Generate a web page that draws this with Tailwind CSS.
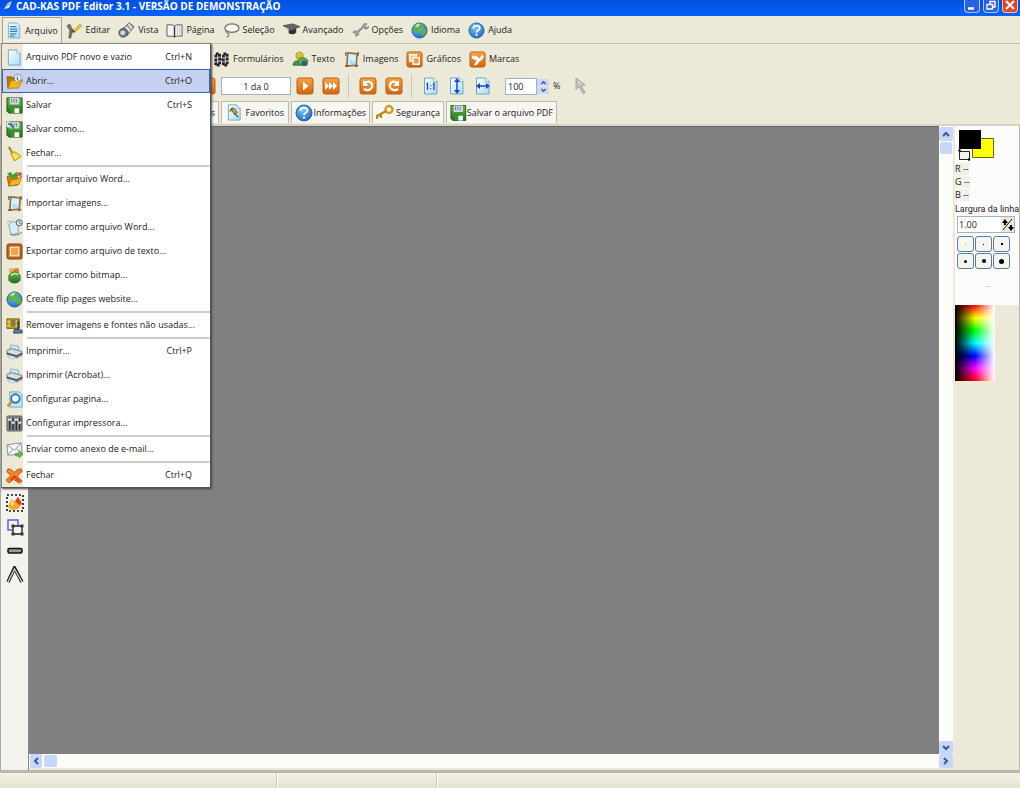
<!DOCTYPE html>
<html lang="pt-BR">
<head>
    <meta charset="UTF-8">
    <meta name="viewport" content="width=device-width, initial-scale=1.0">
    <title>CAD-KAS PDF Editor 3.1</title>
    <script src="https://cdn.jsdelivr.net/npm/@tailwindcss/browser@4"></script>
</head>
<body class="h-screen flex flex-col overflow-hidden bg-[#ece9d8] font-['Open_Sans',sans-serif] text-[9px] leading-3 text-[#222] relative">

    <!-- Icons -->
    <svg class="absolute size-0">
        <defs>
            <linearGradient id="gOrange" x1="0" y1="0" x2="0" y2="1"><stop offset="0" stop-color="#f6a544"/><stop offset="1" stop-color="#d2640c"/></linearGradient>
            <linearGradient id="gPage" x1="0" y1="0" x2="1" y2="1"><stop offset="0" stop-color="#fff"/><stop offset="1" stop-color="#a5dcf5"/></linearGradient>
            <radialGradient id="gBlue" cx=".4" cy=".3" r=".8"><stop offset="0" stop-color="#7cc8f8"/><stop offset="1" stop-color="#1462b8"/></radialGradient>
            <linearGradient id="gGreen" x1="0" y1="0" x2="0" y2="1"><stop offset="0" stop-color="#6cc04a"/><stop offset="1" stop-color="#1e6e1c"/></linearGradient>
        </defs>
        <symbol id="page" viewBox="0 0 18 18"><path d="M2.500 1h9l3.500 3.500V17H2.500z" fill="url(#gPage)" stroke="#6aa7cf"/><path d="M11.500 1v3.500H15" fill="#fff" stroke="#6aa7cf" stroke-width=".7"/></symbol>
        <symbol id="doc" viewBox="0 0 18 18"><path d="M2.500 1h9l3 3v13h-12z" fill="url(#gPage)" stroke="#7ab0c8"/><path d="M4 5h7M4 7.500h8M4 10h8M4 12.500h7M4 15h5" stroke="#2b86bb" stroke-width="1.300"/></symbol>
        <symbol id="tools" viewBox="0 0 18 18"><path d="M1 4l3-2 2 4 1 3-2 8H3l1-8z" fill="#777" stroke="#444" stroke-width=".6"/><path d="M7 10l8-8 2 2-8 7z" fill="#e8c832" stroke="#a88a10" stroke-width=".6"/><path d="M6 8l3 3" stroke="#5b4a10" stroke-width="2"/></symbol>
        <symbol id="spyglass" viewBox="0 0 18 18"><path d="M4 8l8-7 5 4-8 10z" fill="#a9a9a9" stroke="#555"/><path d="M8 5l5 5M11 2l4 5" stroke="#eee" stroke-width="1.500"/><circle cx="5.500" cy="11.500" r="4.500" fill="#74808c" stroke="#444"/><circle cx="5" cy="11.500" r="2.500" fill="#c9dcec"/></symbol>
        <symbol id="book" viewBox="0 0 18 18"><path d="M1 3h6l2 1.500L11 3h6v12h-6l-2 1-2-1H1z" fill="#f6f6f6" stroke="#555"/><path d="M9 4.500V16" stroke="#333" stroke-width="1.500"/><path d="M12 4v10M14.500 4v10" stroke="#aaa" stroke-width=".8"/></symbol>
        <symbol id="lasso" viewBox="0 0 18 18"><ellipse cx="9.500" cy="6.500" rx="7.500" ry="4.500" fill="#f7f6f0" stroke="#777" stroke-width="1.400"/><path d="M3 9c-1 3 4 2 3 5 0 1-1 2-2 2" fill="none" stroke="#777" stroke-width="1.200"/></symbol>
        <symbol id="cap" viewBox="0 0 18 18"><path d="M0 4l10-2 8 3-9 3z" fill="#666" stroke="#333" stroke-width=".7"/><path d="M6 7.500V12c3 2 6 1 8-1V6.500l-5 2z" fill="#333"/><path d="M3 5l2 3" stroke="#999"/></symbol>
        <symbol id="wrench" viewBox="0 0 18 18"><path d="M1 11c1-2 3-2 4-1l6-5c0-3 3-4 5-3l-2 2 1 2 3-1c-1 3-4 3-6 1l-5 5c1 3-2 5-4 3l2-2z" fill="#a5a5a5" stroke="#777" stroke-width=".8"/></symbol>
        <symbol id="globe" viewBox="0 0 18 18"><circle cx="9" cy="9" r="8" fill="url(#gBlue)" stroke="#28618f"/><path d="M3 5c3-4 8-4 10-2l-1 4-3 1-1 3-3-1-3-1zM11 9l5-2c1 4-1 7-4 8l-2-3z" fill="#5db23c"/><path d="M4 4c2-2 4-2.500 6-2L7 6z" fill="#e8f6e0" opacity=".7"/></symbol>
        <symbol id="help" viewBox="0 0 18 18"><circle cx="9" cy="9" r="8" fill="url(#gBlue)" stroke="#2c6294"/><path d="M5.500 7c0-4.500 7-4 7-.5 0 2.500-3.500 2-3.500 4.500" fill="none" stroke="#fff" stroke-width="1.900"/><circle cx="9" cy="13.600" r="1.200" fill="#fff"/></symbol>
        <symbol id="openfolder" viewBox="0 0 18 18"><path d="M1 4h5l1 1h5v10L2 16z" fill="#b97408" stroke="#7a4c05" stroke-width=".7"/><rect x="9" y="2" width="7" height="9" rx="1" fill="#e4eef2" stroke="#7e8f9a" stroke-width=".8"/><path d="M12 4v3l2 1" stroke="#446" fill="none"/><path d="M2 16L5 8h5l2 2 6-3-5 9z" fill="#f5b428" stroke="#a96c08" stroke-width=".7"/></symbol>
        <symbol id="disk" viewBox="0 0 18 18"><path d="M1 1h16v16H3l-2-2z" fill="url(#gGreen)" stroke="#1c5420"/><path d="M4 1h10v7H4z" fill="#cfd9e4"/><path d="M6 2v4M8.500 2v4M11 2v4" stroke="#6f7d93"/><path d="M5 11h9v6H5z" fill="#3b8e34"/><path d="M9 12h5v5H9z" fill="#fff"/></symbol>
        <symbol id="diskas" viewBox="0 0 18 18"><use href="#disk"/><path d="M0 0h4l2 3-2 5-4-2z" fill="#d7eef1" stroke="#4c8990" stroke-width=".7"/><path d="M2 3c3 0 5 1 6 5" stroke="#155c2b" stroke-width="1.500" fill="none"/></symbol>
        <symbol id="broom" viewBox="0 0 18 18"><path d="M3 2l4 7" stroke="#b2893a" stroke-width="2.400"/><path d="M5 9l4-2 7 5-7 5z" fill="#f2da2c" stroke="#9c860e" stroke-width=".8"/><path d="M8 10l2 4M10 9l3 4" stroke="#fff8a0"/></symbol>
        <symbol id="importword" viewBox="0 0 18 18"><path d="M1 6l5-2 2 2h4v9l-9 1z" fill="#c68412" stroke="#805206" stroke-width=".7"/><path d="M1 3l4-2 2 3 4-3 3 4-7 3z" fill="#4a9a3c"/><path d="M12 1l5 1-2 4z" fill="#dc3c28"/><path d="M3 16l3-7h5l6-4-3 9z" fill="#f8b22a" stroke="#a96808" stroke-width=".7"/></symbol>
        <symbol id="frame" viewBox="0 0 18 18"><path d="M5 2l10 1-1 12-10 1z" fill="#d5f0fa" stroke="#957347" stroke-width="1.800"/><path d="M3 1v4M16 1v4M2 16h4M13 17l3-2" stroke="#5f5138" stroke-width="1.300"/><path d="M6 13l3-4 4 5z" fill="#a9dcf0"/></symbol>
        <symbol id="scroll" viewBox="0 0 18 18"><path d="M2 3h9l2 3v9l-8 2-1-7z" fill="#d5eef7" stroke="#88a6b4"/><path d="M1 3c2-2 4 0 3 3" fill="#fff" stroke="#88a6b4"/><circle cx="14" cy="4" r="3.300" fill="#dbe4e8" stroke="#555"/><path d="M14 2v2l2 1M5 16c4 2 8 1 12-2" stroke="#4b7080" fill="none"/></symbol>
        <symbol id="stamp" viewBox="0 0 18 18"><rect x="1" y="1" width="16" height="16" rx="2" fill="#b4641c" stroke="#7e4512"/><rect x="4.500" y="4.500" width="9" height="9" fill="#f4a24c" stroke="#fbe1b4" stroke-width="1.500"/></symbol>
        <symbol id="bitmap" viewBox="0 0 18 18"><circle cx="6" cy="4" r="3" fill="#e9b25c"/><circle cx="11" cy="4" r="3" fill="#d08436"/><path d="M3 9c3-5 9-5 12 0v5c-3 4-9 4-12 0z" fill="url(#gGreen)" stroke="#2c6a22" stroke-width=".8"/><path d="M5 9c2-2 5-3 8-1" stroke="#c6eca8" fill="none" stroke-width="1.500"/></symbol>
        <symbol id="clamp" viewBox="0 0 18 18"><path d="M1 2h13v10H1z" fill="#d9a916" stroke="#6b5413"/><path d="M1 5h13M1 9h13" stroke="#f6e076"/><path d="M5 3h5v7H5z" fill="#7b7a55"/><path d="M9 13l8 1v3H8z" fill="#5a83b4" stroke="#2c4265"/><path d="M13 4v9" stroke="#394250" stroke-width="2"/></symbol>
        <symbol id="printer" viewBox="0 0 18 18"><path d="M4 7l1-5 8 1 1 5z" fill="#bde5f7" stroke="#7ea6ba" stroke-width=".8"/><path d="M1 8l5-2 11 3v4l-6 3L1 12z" fill="#d8dadd" stroke="#666" stroke-width=".8"/><path d="M1 10l10 3 6-3v2l-6 3-10-3z" fill="#4c5157"/><path d="M3 13l7 2-2 2-6-2z" fill="#e8f8ff" stroke="#85b7cf" stroke-width=".8"/></symbol>
        <symbol id="pagezoom" viewBox="0 0 18 18"><path d="M4 1h10l3 3v13H4z" fill="#c9e8f6" stroke="#6aa7cf"/><circle cx="10" cy="8" r="4.500" fill="#f0faff" stroke="#2577bb" stroke-width="2"/><path d="M6.500 11.500L1.500 16" stroke="#c69222" stroke-width="2.600"/></symbol>
        <symbol id="sliders" viewBox="0 0 18 18"><rect x="1" y="1" width="16" height="16" rx="1" fill="#85898e" stroke="#666"/><path d="M4 3v13M7.500 3v13M11 3v13M14.500 3v13" stroke="#2d2f31" stroke-width="1.500"/><path d="M2 5h4M6 8h3M9 5h4M13 8h3" stroke="#e4e4e4" stroke-width="2.400"/></symbol>
        <symbol id="mail" viewBox="0 0 18 18"><path d="M1 4l15-2 1 12-15 1z" fill="#f5f7f9" stroke="#84909a"/><path d="M1 4l8 6 7-8M2 15l5-6M17 14l-6-6" fill="none" stroke="#84909a"/><path d="M10 13h4v-3l4 4-4 4v-2h-4z" fill="#66bb47" stroke="#378122" stroke-width=".6"/></symbol>
        <symbol id="cross" viewBox="0 0 18 18"><path d="M2 2c3 0 5 2 7 4 2-3 4-4 7-4l1 3c-2 1-4 3-5 5l5 5-3 2-6-4-5 4-3-3 5-5-4-4z" fill="#f58a1c" stroke="#ca3c10"/><path d="M5 14l4-4 5 5" stroke="#e0391c" stroke-width="2" fill="none"/></symbol>
        <symbol id="film" viewBox="0 0 18 18"><rect x="3" y="3" width="4" height="12" fill="#ddd" stroke="#222" stroke-width="3" stroke-dasharray="3 1"/><rect x="11" y="3" width="4" height="12" fill="#ddd" stroke="#222" stroke-width="3" stroke-dasharray="3 1"/><path d="M7 9h4" stroke="#333" stroke-width="2"/></symbol>
        <symbol id="people" viewBox="0 0 18 18"><circle cx="8" cy="5" r="4" fill="#d9c13a" stroke="#8b7a1c" stroke-width=".6"/><path d="M1 15c0-6 8-6 9 0z" fill="#3b9d44" stroke="#1c5727" stroke-width=".7"/><path d="M6 10c2-4 8-4 11 0l-1 5H8z" fill="#63ad3f" stroke="#2e6c1e" stroke-width=".7"/><circle cx="13" cy="13" r="3" fill="#2d5c9c"/></symbol>
        <symbol id="btn" viewBox="0 0 18 18"><rect x="1" y="1" width="16" height="16" rx="2" fill="url(#gOrange)" stroke="#b5611b"/></symbol>
        <symbol id="copy" viewBox="0 0 18 18"><use href="#btn"/><path d="M4 4h7v7H4z" fill="#f4c184" stroke="#fff" stroke-width="1.400"/><path d="M7.500 7h6.500v7H7.500z" fill="#e79b52" stroke="#fff" stroke-width="1.400"/></symbol>
        <symbol id="marks" viewBox="0 0 18 18"><use href="#btn"/><path d="M3 5h5l3 3 3-4 2 2-3 4-2 1-3 4H5l3-5-5-2z" fill="#fff"/></symbol>
        <symbol id="first" viewBox="0 0 18 18"><use href="#btn"/><path d="M12 4.500L6 9l6 4.500z" fill="#fff"/></symbol>
        <symbol id="next" viewBox="0 0 18 18"><use href="#btn"/><path d="M7 4.500L12.500 9 7 13.500z" fill="#fff"/></symbol>
        <symbol id="last" viewBox="0 0 18 18"><use href="#btn"/><path d="M3 5l4 4-4 4zM7 5l4 4-4 4zM11 5l4 4-4 4z" fill="#fff"/></symbol>
        <symbol id="rotl" viewBox="0 0 18 18"><use href="#btn"/><path d="M6 6c4-3 8 0 7 4-1 3-5 4-8 2" fill="none" stroke="#fff" stroke-width="2.200"/><path d="M4 3v6h6z" fill="#fff"/></symbol>
        <symbol id="rotr" viewBox="0 0 18 18"><use href="#btn"/><path d="M12 6C8 3 4 6 5 10c1 3 5 4 8 2" fill="none" stroke="#fff" stroke-width="2.200"/><path d="M14 3v6H8z" fill="#fff"/></symbol>
        <symbol id="fit1" viewBox="0 0 18 18"><use href="#page"/><path d="M4.500 7.500l1-1V13M11 7.500l1-1V13" fill="none" stroke="#2440c8" stroke-width="1.300"/><path d="M8.300 8h1v1h-1zM8.300 11h1v1h-1z" fill="#2440c8"/></symbol>
        <symbol id="fith" viewBox="0 0 18 18"><use href="#page"/><path d="M9 3v12" stroke="#2440c8" stroke-width="1.500"/><path d="M6 5l3-4 3 4zM6 13l3 4 3-4z" fill="#2440c8"/></symbol>
        <symbol id="fitw" viewBox="0 0 18 18"><use href="#page"/><path d="M4 9h10" stroke="#2440c8" stroke-width="1.500"/><path d="M6 6L2 9l4 3zM12 6l4 3-4 3z" fill="#2440c8"/></symbol>
        <symbol id="cursor" viewBox="0 0 18 18"><path d="M4 1l9 7-4 .5 4 7-2 1-4-7-3 3z" fill="#c6c3c2" stroke="#a19fa4"/><path d="M6 4l4 4" stroke="#eee"/></symbol>
        <symbol id="pin" viewBox="0 0 18 18"><use href="#page"/><path d="M5 5l3-1 4 5-3 2z" fill="#d9a02c" stroke="#5b5330"/><path d="M9 10l4 4M4 8l3-3" stroke="#4a6b32" stroke-width="1.500"/></symbol>
        <symbol id="key" viewBox="0 0 18 18"><circle cx="13" cy="5.500" r="3.500" fill="none" stroke="#d29c25" stroke-width="2.500"/><path d="M10 7L1 12v3M5 10v4" stroke="#b98417" stroke-width="2.200" fill="none"/></symbol>
        <symbol id="selimage" viewBox="0 0 18 18"><path d="M2 13l3-8 4 3 3-5 4 7-4 5-6 1z" fill="#f5a52c"/><path d="M9 7l4 4 3-2-4-6z" fill="#dc4020"/><path d="M4 6l4 3-2 4z" fill="#ffe98c"/><rect x="1" y="1" width="16" height="16" fill="none" stroke="#111" stroke-width="1.600" stroke-dasharray="2 2"/></symbol>
        <symbol id="selobj" viewBox="0 0 18 18"><path d="M2 2h10v10H2z" fill="none" stroke="#5566dc" stroke-width="1.500"/><path d="M7 8h9v8H7z" fill="#f4f4f4" stroke="#222" stroke-width="1.300"/><path d="M5.500 6.500h3v3h-3zM14.500 6.500h3v3h-3zM5.500 14.500h3v3h-3zM14.500 14.500h3v3h-3z" fill="#333"/></symbol>
        <symbol id="bar" viewBox="0 0 18 18"><rect x="2" y="6.500" width="14" height="4.500" rx="1.500" fill="#999" stroke="#111" stroke-width="1.600"/></symbol>
        <symbol id="caret" viewBox="0 0 18 18"><path d="M2 16L8.500 2 16 16" fill="none" stroke="#222" stroke-width="3.500"/><path d="M2 16L8.500 3 16 16" fill="none" stroke="#ddd" stroke-width="1.200"/></symbol>
        <symbol id="chev" viewBox="0 0 10 10"><path d="M2 7l3-3 3 3" fill="none" stroke="#3f5796" stroke-width="2"/></symbol>
    </svg>

    <!-- Title bar -->
    <header class="h-4 shrink-0 flex items-start justify-between bg-linear-to-b from-[#0450dc] to-[#0662fa] text-white">
        <div class="flex items-center gap-1 pl-1">
            <svg class="w-2 h-3" viewBox="0 0 8 12"><path d="M0 9l4-6 4-2-3 7z" fill="#dce8ff"/><path d="M3 6l3-3" stroke="#888"/></svg>
            <h1 class="text-[10px] leading-3 font-bold whitespace-nowrap">CAD-KAS PDF Editor 3.1 - VERSÃO DE DEMONSTRAÇÃO</h1>
        </div>
        <div class="flex gap-[3px] pr-[2px]">
            <button aria-label="Minimizar" class="w-4 h-[13px] rounded-b-sm border border-t-0 border-[#a9c3f7] bg-[#2a62dc]"><svg class="w-full h-full" viewBox="0 0 14 12"><path d="M3 8.500h6" stroke="#fff" stroke-width="2.500"/></svg></button>
            <button aria-label="Restaurar" class="w-4 h-[13px] rounded-b-sm border border-t-0 border-[#a9c3f7] bg-[#2a62dc]"><svg class="w-full h-full" viewBox="0 0 14 12"><path d="M6 4V1.500h5V7H9M3 4.500h5.500V9H3z" fill="none" stroke="#fff" stroke-width="1.400"/></svg></button>
            <button aria-label="Fechar janela" class="w-4 h-[13px] rounded-b-sm border border-t-0 border-[#f0c4b4] bg-[#d9472a]"><svg class="w-full h-full" viewBox="0 0 14 12"><path d="M3 1l8 8M11 1L3 9" stroke="#fff" stroke-width="2"/></svg></button>
        </div>
    </header>

    <!-- Menu bar -->
    <nav class="h-7 shrink-0 flex items-stretch pl-[2px] pt-px border-b border-[#c5c2b2] whitespace-nowrap">
        <button class="flex items-center gap-[2px] px-[3px] border border-b-0 border-[#a5a295] bg-[#f0eee2]"><svg class="size-[17px]"><use href="#doc"/></svg>Arquivo</button>
        <button class="flex items-center gap-[3px] px-[4px]"><svg class="size-[17px]"><use href="#tools"/></svg>Editar</button>
        <button class="flex items-center gap-[3px] px-[4px]"><svg class="size-[17px]"><use href="#spyglass"/></svg>Vista</button>
        <button class="flex items-center gap-[3px] px-[4px]"><svg class="size-[17px]"><use href="#book"/></svg>Página</button>
        <button class="flex items-center gap-[3px] px-[4px]"><svg class="size-[17px]"><use href="#lasso"/></svg>Seleção</button>
        <button class="flex items-center gap-[3px] px-[4px]"><svg class="size-[17px]"><use href="#cap"/></svg>Avançado</button>
        <button class="flex items-center gap-[3px] px-[4px]"><svg class="size-[17px]"><use href="#wrench"/></svg>Opções</button>
        <button class="flex items-center gap-[3px] px-[4px]"><svg class="size-[17px]"><use href="#globe"/></svg>Idioma</button>
        <button class="flex items-center gap-[3px] px-[4px]"><svg class="size-[17px]"><use href="#help"/></svg>Ajuda</button>
    </nav>

    <!-- Tool groups -->
    <div class="h-[30px] shrink-0 flex items-center pl-[209px] whitespace-nowrap">
        <button class="flex items-center gap-[3px] px-[4px]"><svg class="size-[17px]"><use href="#film"/></svg>Formulários</button>
        <button class="flex items-center gap-[3px] px-[4px]"><svg class="size-[17px]"><use href="#people"/></svg>Texto</button>
        <button class="flex items-center gap-[3px] px-[4px]"><svg class="size-[17px]"><use href="#frame"/></svg>Imagens</button>
        <button class="flex items-center gap-[3px] px-[4px]"><svg class="size-[17px]"><use href="#copy"/></svg>Gráficos</button>
        <button class="flex items-center gap-[3px] px-[4px]"><svg class="size-[17px]"><use href="#marks"/></svg>Marcas</button>
    </div>

    <!-- Page navigation -->
    <div class="h-6 shrink-0 flex items-center pl-[198px] gap-2">
        <button aria-label="Página anterior" class="-mr-[2px]"><svg class="size-[18px]"><use href="#first"/></svg></button>
        <input aria-label="Página" value="1 da 0" class="w-[70px] h-[18px] -ml-px bg-white border border-[#9db3cb] text-center mr-[-3px]">
        <button aria-label="Próxima página"><svg class="size-[18px]"><use href="#next"/></svg></button>
        <button aria-label="Última página"><svg class="size-[18px]"><use href="#last"/></svg></button>
        <span class="w-px h-6 bg-[#c9c6b6] mr-[2px]"></span>
        <button aria-label="Girar à esquerda"><svg class="size-[18px]"><use href="#rotl"/></svg></button>
        <button aria-label="Girar à direita"><svg class="size-[18px]"><use href="#rotr"/></svg></button>
        <span class="w-px h-6 bg-[#c9c6b6] mr-[2px]"></span>
        <button aria-label="Tamanho real"><svg class="size-[18px]"><use href="#fit1"/></svg></button>
        <button aria-label="Ajustar à altura"><svg class="size-[18px]"><use href="#fith"/></svg></button>
        <button aria-label="Ajustar à largura"><svg class="size-[18px]"><use href="#fitw"/></svg></button>
        <div class="flex items-center ml-[5px]">
            <input id="zoom" value="100" class="w-8 h-[17px] pl-[2px] bg-white border border-[#9db3cb]">
            <div class="flex flex-col w-3 gap-px">
                <button aria-label="Aumentar" class="h-[7px] bg-[#c9d7f8] flex justify-center"><svg class="size-[7px]"><use href="#chev"/></svg></button>
                <button aria-label="Diminuir" class="h-[7px] bg-[#c9d7f8] flex justify-center"><svg class="size-[7px] rotate-180"><use href="#chev"/></svg></button>
            </div>
            <label for="zoom" class="pl-1">%</label>
        </div>
        <button aria-label="Selecionar" class="pl-1"><svg class="size-[18px]"><use href="#cursor"/></svg></button>
    </div>

    <!-- Tabs -->
    <div class="h-7 shrink-0 flex items-start pt-[3px] pl-[198px] gap-[2px] whitespace-nowrap border-b-2 border-[#d6d3c4]">
        <button class="h-[22px] w-[21px] pr-[3px] text-right bg-[#f7f6f1] border-t border-r border-[#bdbcae]">s</button>
        <button class="h-[22px] w-[68px] flex items-center justify-between px-1 bg-[#f7f6f1] border border-b-0 border-[#bdbcae]"><svg class="size-[17px]"><use href="#pin"/></svg>Favoritos</button>
        <button class="h-[22px] w-[79px] flex items-center justify-between px-[3px] bg-[#f7f6f1] border border-b-0 border-[#bdbcae]"><svg class="size-[18px]"><use href="#help"/></svg>Informações</button>
        <button class="h-[22px] w-[72px] flex items-center justify-between px-[3px] bg-[#f7f6f1] border border-b-0 border-[#bdbcae]"><svg class="size-[18px]"><use href="#key"/></svg>Segurança</button>
        <button class="h-[22px] w-[111px] flex items-center justify-between px-[3px] bg-[#f7f6f1] border border-b-0 border-[#bdbcae]"><svg class="size-[18px]"><use href="#disk"/></svg>Salvar o arquivo PDF</button>
    </div>

    <!-- Work area -->
    <main class="flex-1 min-h-0 flex border-r border-b-3 border-[#bab8ac]">
        <aside class="w-[29px] shrink-0 border-l border-r border-l-[#aaa] border-r-[#888] bg-[#f3f2ec] flex flex-col items-center gap-[6px] pt-[368px]">
            <button aria-label="Selecionar imagem"><svg class="size-[18px]"><use href="#selimage"/></svg></button>
            <button aria-label="Selecionar objeto"><svg class="size-[18px]"><use href="#selobj"/></svg></button>
            <button aria-label="Retângulo"><svg class="size-[18px]"><use href="#bar"/></svg></button>
            <button aria-label="Linha"><svg class="size-[18px]"><use href="#caret"/></svg></button>
        </aside>
        <section class="flex-1 flex flex-col">
            <div class="flex-1 flex">
                <div class="flex-1 bg-[#808080] border-t border-[#666]"></div>
                <div class="w-[14px] pt-px bg-[#fcfcf9] flex flex-col gap-px">
                    <button aria-label="Rolar para cima" class="h-[14px] bg-[#c7d6fb] rounded-xs flex items-center justify-center"><svg class="size-[10px]"><use href="#chev"/></svg></button>
                    <div class="h-3 mx-px bg-[#c7d6fb] rounded-xs"></div>
                    <button aria-label="Rolar para baixo" class="h-[13px] mt-auto bg-[#c7d6fb] rounded-xs flex items-center justify-center"><svg class="size-[10px] rotate-180"><use href="#chev"/></svg></button>
                </div>
            </div>
            <div class="h-[14px] mb-[2px] bg-[#fcfcf9] flex gap-[2px]">
                <button aria-label="Rolar para a esquerda" class="w-3 ml-px bg-[#c7d6fb] rounded-xs flex items-center justify-center"><svg class="size-[10px] -rotate-90"><use href="#chev"/></svg></button>
                <div class="w-[13px] my-px bg-[#c7d6fb] rounded-xs"></div>
                <button aria-label="Rolar para a direita" class="w-[14px] ml-auto bg-[#c7d6fb] rounded-xs flex items-center justify-center"><svg class="size-[10px] rotate-90"><use href="#chev"/></svg></button>
            </div>
        </section>

        <!-- Colours and line width -->
        <aside class="w-[66px] shrink-0 pl-[2px]">
            <div class="bg-[#fcfcfd] h-[179px] pt-[3px]">
                <svg class="w-[38px] h-[32px] ml-[3px]" viewBox="0 0 38 32"><path d="M14.500 9.500h21v19h-21z" fill="#ff0" stroke="#6b6b00"/><path d="M1 1h22v19H1z"/><path d="M1.500 22.500h10v8h-10z" fill="#f3f2ea" stroke="#222"/><circle cx="1.500" cy="21.500" r="1.200"/><circle cx="11" cy="30.500" r="1.200"/></svg>
                <div class="flex flex-col items-start gap-px pt-[2px]">
                    <span class="bg-[#f1efe6]">R --</span>
                    <span class="bg-[#f1efe6]">G --</span>
                    <span class="bg-[#f1efe6]">B --</span>
                </div>
                <label for="lineWidth" class="block pt-[2px] whitespace-nowrap font-[Roboto,sans-serif]">Largura da linha</label>
                <div class="flex h-[17px] mt-px ml-[2px] w-[58px] border border-[#9db3cb] bg-white">
                    <input id="lineWidth" value="1.00" class="min-w-0 flex-1 pl-px">
                    <button aria-label="Alterar largura" class="bg-[#ece9d8]"><svg class="w-[13px] h-[15px]" viewBox="0 0 13 15"><path d="M2 13L11 2" stroke="#111"/><path d="M1 6l3-4 3 4H5v2H3V6zM7 10h2V8h2v2h2l-3 4z"/></svg></button>
                </div>
                <div class="grid grid-cols-3 gap-px mt-[3px] ml-[2px] w-[53px]">
                    <button aria-label="Espessura 1" class="h-4 rounded-[3px] border border-[#5b7d9c] bg-[#f6f6f1] flex items-center justify-center"><i class="size-px bg-[#999]"></i></button>
                    <button aria-label="Espessura 2" class="h-4 rounded-[3px] border border-[#5b7d9c] bg-[#f6f6f1] flex items-center justify-center"><i class="size-px bg-black"></i></button>
                    <button aria-label="Espessura 3" class="h-4 rounded-[3px] border border-[#5b7d9c] bg-[#f6f6f1] flex items-center justify-center"><i class="size-[2px] bg-black"></i></button>
                    <button aria-label="Espessura 4" class="h-4 rounded-[3px] border border-[#5b7d9c] bg-[#f6f6f1] flex items-center justify-center"><i class="size-[3px] rounded-full bg-black"></i></button>
                    <button aria-label="Espessura 5" class="h-4 rounded-[3px] border border-[#5b7d9c] bg-[#f6f6f1] flex items-center justify-center"><i class="size-1 rounded-full bg-black"></i></button>
                    <button aria-label="Espessura 6" class="h-4 rounded-[3px] border border-[#5b7d9c] bg-[#f6f6f1] flex items-center justify-center"><i class="size-[5px] rounded-full bg-black"></i></button>
                </div>
                <div class="h-[34px] flex items-center justify-center"><i class="size-px bg-[#888]"></i></div>
            </div>
            <div class="w-10 h-[76px] bg-[linear-gradient(to_right,#000,transparent_50%,#fff),linear-gradient(to_bottom,#f00,#ff0_17%,#0f0_33%,#0ff_50%,#00f_67%,#f0f_83%,#f00)]"></div>
        </aside>
    </main>

    <!-- Status bar -->
    <footer class="h-[15px] shrink-0 flex bg-linear-to-b from-[#f3f1e6] to-[#e6e3d0]">
        <div class="w-[277px] border-r border-[#cfccbc]"></div>
        <div class="w-[160px] border-r border-l border-l-white border-r-[#cfccbc]"></div>
        <div class="flex-1 border-l border-white"></div>
    </footer>

    <!-- Arquivo menu -->
    <div class="absolute left-px top-[43px] w-[210px] pt-px border border-[#8a887e] border-b-[#555] border-r-[#555] shadow-[1px_1px_2px_#444] bg-[linear-gradient(to_right,#ece9d8_21px,#fff_21px)] z-10 whitespace-nowrap">
        <button class="h-6 w-full flex items-center pl-1 pr-[18px]"><svg class="size-[17px] mr-[3px]"><use href="#page"/></svg>Arquivo PDF novo e vazio<span class="ml-auto">Ctrl+N</span></button>
        <button class="h-6 w-full flex items-center pl-[3px] pr-[17px] border border-[#3a62b4] bg-[#c5d1ee]"><svg class="size-[17px] mr-[3px]"><use href="#openfolder"/></svg>Abrir...<span class="ml-auto">Ctrl+O</span></button>
        <button class="h-6 w-full flex items-center pl-1 pr-[18px]"><svg class="size-[17px] mr-[3px]"><use href="#disk"/></svg>Salvar<span class="ml-auto">Ctrl+S</span></button>
        <button class="h-6 w-full flex items-center pl-1"><svg class="size-[17px] mr-[3px]"><use href="#diskas"/></svg>Salvar como...</button>
        <button class="h-6 w-full flex items-center pl-1"><svg class="size-[17px] mr-[3px]"><use href="#broom"/></svg>Fechar...</button>
        <hr class="ml-[25px] border-t-2 border-[#cbcbc8]">
        <button class="h-6 w-full flex items-center pl-1"><svg class="size-[17px] mr-[3px]"><use href="#importword"/></svg>Importar arquivo Word...</button>
        <button class="h-6 w-full flex items-center pl-1"><svg class="size-[17px] mr-[3px]"><use href="#frame"/></svg>Importar imagens...</button>
        <button class="h-6 w-full flex items-center pl-1"><svg class="size-[17px] mr-[3px]"><use href="#scroll"/></svg>Exportar como arquivo Word...</button>
        <button class="h-6 w-full flex items-center pl-1"><svg class="size-[17px] mr-[3px]"><use href="#stamp"/></svg>Exportar como arquivo de texto...</button>
        <button class="h-6 w-full flex items-center pl-1"><svg class="size-[17px] mr-[3px]"><use href="#bitmap"/></svg>Exportar como bitmap...</button>
        <button class="h-6 w-full flex items-center pl-1"><svg class="size-[17px] mr-[3px]"><use href="#globe"/></svg>Create flip pages website...</button>
        <hr class="ml-[25px] border-t-2 border-[#cbcbc8]">
        <button class="h-6 w-full flex items-center pl-1"><svg class="size-[17px] mr-[3px]"><use href="#clamp"/></svg>Remover imagens e fontes não usadas...</button>
        <hr class="ml-[25px] border-t-2 border-[#cbcbc8]">
        <button class="h-6 w-full flex items-center pl-1 pr-[18px]"><svg class="size-[17px] mr-[3px]"><use href="#printer"/></svg>Imprimir...<span class="ml-auto">Ctrl+P</span></button>
        <button class="h-6 w-full flex items-center pl-1"><svg class="size-[17px] mr-[3px]"><use href="#printer"/></svg>Imprimir (Acrobat)...</button>
        <button class="h-6 w-full flex items-center pl-1"><svg class="size-[17px] mr-[3px]"><use href="#pagezoom"/></svg>Configurar pagina...</button>
        <button class="h-6 w-full flex items-center pl-1"><svg class="size-[17px] mr-[3px]"><use href="#sliders"/></svg>Configurar impressora...</button>
        <hr class="ml-[25px] border-t-2 border-[#cbcbc8]">
        <button class="h-6 w-full flex items-center pl-1"><svg class="size-[17px] mr-[3px]"><use href="#mail"/></svg>Enviar como anexo de e-mail...</button>
        <hr class="ml-[25px] border-t-2 border-[#cbcbc8]">
        <button class="h-6 w-full flex items-center pl-1 pr-[18px]"><svg class="size-[17px] mr-[3px]"><use href="#cross"/></svg>Fechar<span class="ml-auto">Ctrl+Q</span></button>
    </div>
</body>
</html>
